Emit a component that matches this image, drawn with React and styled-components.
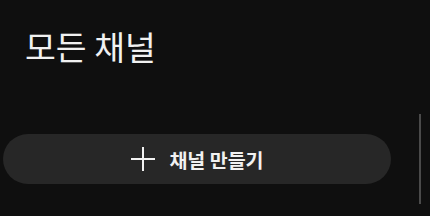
import React from "react";
import styled, { createGlobalStyle } from "styled-components";

const Global = createGlobalStyle`
  html, body { margin: 0; padding: 0; background: #0f0f0f; }
  body { font-family: "Noto Sans CJK KR", "Noto Sans", sans-serif; }
`;

const Page = styled.div`
  width: 430px;
  height: 216px;
  display: flex;
  background: #0f0f0f;
  color: #f1f1f1;
  overflow: hidden;
`;

const Main = styled.div`
  width: 388px;
  margin-left: 3px;
  display: flex;
  flex-direction: column;
`;

const Title = styled.h1`
  margin: 0;
  padding: 24px 0 0 22px;
  height: 44px;
  font-size: 33.5px;
  font-weight: 400;
  line-height: 44px;
  color: #f1f1f1;
`;

const CreateButton = styled.button`
  margin-top: 66px;
  height: 50px;
  width: 100%;
  border: none;
  border-radius: 25px;
  background: #272727;
  color: #f1f1f1;
  display: flex;
  align-items: center;
  justify-content: center;
  gap: 13px;
  font-family: inherit;
  font-size: 19.5px;
  font-weight: 700;
  padding: 0;
  cursor: pointer;
`;

const Divider = styled.div`
  width: 2px;
  height: 90px;
  margin: 114px 0 0 28px;
  background: #4a4a4a;
`;

const PlusIcon = () => (
  <svg width="26" height="26" viewBox="0 0 26 26">
    <path d="M13 1v24M1 13h24" stroke="#f1f1f1" strokeWidth="2" fill="none" />
  </svg>
);

export default function App() {
  return (
    <>
      <Global />
      <Page>
        <Main>
          <Title>모든 채널</Title>
          <CreateButton>
            <PlusIcon />
            <span>채널 만들기</span>
          </CreateButton>
        </Main>
        <Divider />
      </Page>
    </>
  );
}
